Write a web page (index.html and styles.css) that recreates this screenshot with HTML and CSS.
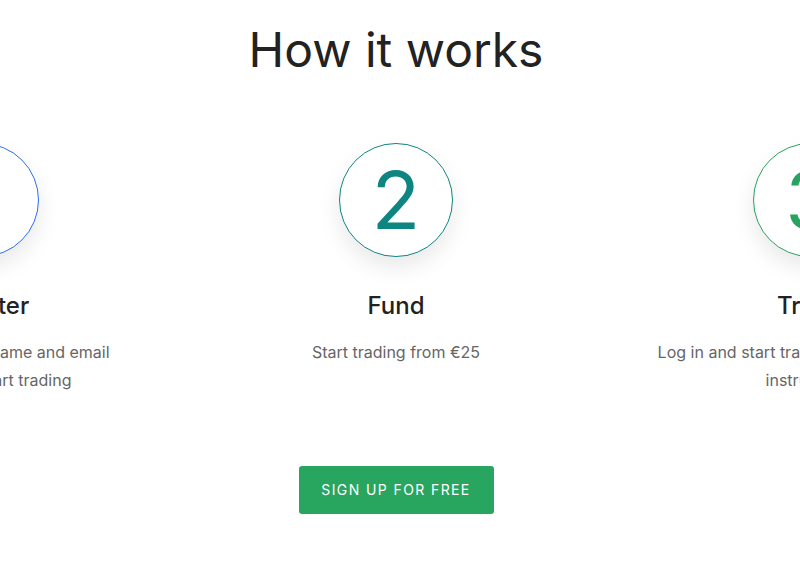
FILE: index.html
```html
<!DOCTYPE html>
<html lang="en">
<head>
<meta charset="utf-8">
<title>How it works</title>
<link rel="stylesheet" href="styles.css">
</head>
<body>
<main class="page">
  <h1 class="heading">How it works</h1>
  <div class="steps">
    <section class="step step-blue">
      <div class="circle">1</div>
      <h2 class="step-title">Register</h2>
      <p class="step-text">Sign up with your name and email<br>so you can start trading</p>
    </section>
    <section class="step step-teal">
      <div class="circle">2</div>
      <h2 class="step-title">Fund</h2>
      <p class="step-text">Start trading from €25</p>
    </section>
    <section class="step step-green">
      <div class="circle">3</div>
      <h2 class="step-title">Trade</h2>
      <p class="step-text">Log in and start trading more than 3,000<br>instruments</p>
    </section>
  </div>
  <div class="cta">
    <a class="btn" href="#">SIGN UP FOR FREE</a>
  </div>
</main>
</body>
</html>
```

FILE: styles.css
```css
html, body {
  margin: 0;
  padding: 0;
  background: #ffffff;
  overflow: hidden;
}
body {
  font-family: "Inter", "Noto Sans", sans-serif;
  color: #222222;
}
.page {
  width: 792px;
}
.heading {
  margin: 21px 0 0;
  font-size: 48px;
  line-height: 58px;
  font-weight: 400;
  text-align: center;
  color: #222222;
}
.steps {
  display: flex;
  width: 1242px;
  margin: 64px 0 0 -225px;
}
.step {
  width: 414px;
  flex: none;
  display: flex;
  flex-direction: column;
  align-items: center;
}
.circle {
  width: 114px;
  height: 114px;
  box-sizing: border-box;
  border-radius: 50%;
  border: 1px solid currentColor;
  background: #ffffff;
  box-shadow: 0 10px 22px rgba(0, 0, 0, 0.09);
  display: flex;
  align-items: center;
  justify-content: center;
  font-size: 80px;
  font-weight: 400;
  line-height: 1;
}
.step-blue .circle { color: #2b6ef2; }
.step-teal .circle { color: #0f8582; }
.step-green .circle { color: #27a35f; }
.step-title {
  margin: 33px 0 0;
  font-size: 24px;
  line-height: 32px;
  font-weight: 500;
  color: #222222;
}
.step-text {
  margin: 16px 0 0;
  font-size: 16px;
  line-height: 28px;
  color: #666666;
  text-align: center;
}
.cta {
  display: flex;
  justify-content: center;
  margin-top: 72px;
}
.btn {
  display: inline-block;
  box-sizing: border-box;
  width: 195px;
  height: 48px;
  line-height: 48px;
  text-align: center;
  background: #28a55f;
  color: #ffffff;
  border-radius: 3px;
  font-size: 14px;
  letter-spacing: 1.4px;
  text-decoration: none;
}
```
